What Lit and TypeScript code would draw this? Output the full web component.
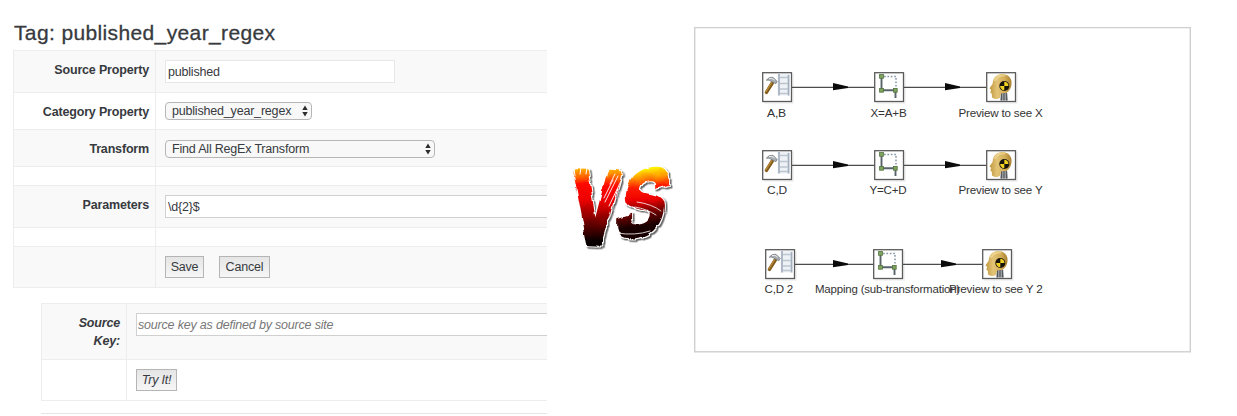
import { LitElement, html, svg, css } from "lit";
import { customElement } from "lit/decorators.js";

type Kind = "calc" | "map" | "preview";
interface Step { kind: Kind; x: number; label: string; lx: number; lw: number; }
interface Flow { y: number; base: number; arrows: number[]; steps: Step[]; }

const flows: Flow[] = [
  { y: 72, base: 116.5, arrows: [833, 945], steps: [
    { kind: "calc", x: 762, label: "A,B", lx: 767, lw: 19 },
    { kind: "map", x: 874, label: "X=A+B", lx: 870.5, lw: 36 },
    { kind: "preview", x: 986, label: "Preview to see X", lx: 958.5, lw: 84 },
  ] },
  { y: 150, base: 194, arrows: [833, 945], steps: [
    { kind: "calc", x: 762, label: "C,D", lx: 767, lw: 20 },
    { kind: "map", x: 874, label: "Y=C+D", lx: 869.5, lw: 37 },
    { kind: "preview", x: 986, label: "Preview to see Y", lx: 958.5, lw: 84 },
  ] },
  { y: 249, base: 293, arrows: [833, 941], steps: [
    { kind: "calc", x: 765, label: "C,D 2", lx: 764.5, lw: 28.5 },
    { kind: "map", x: 873, label: "Mapping (sub-transformation)", lx: 815, lw: 145 },
    { kind: "preview", x: 982, label: "Preview to see Y 2", lx: 949, lw: 93.5 },
  ] },
];

const glyphs = {
  calc: svg`
    <rect x="15.5" y="2" width="13" height="21.5" fill="#eef1f5"/>
    <path d="M17 2V23.5M26.5 3V23.5" stroke="#a4afbe" stroke-width="1.7" fill="none"/>
    <path d="M18 5.5H26M18 11.5H26M18 17H26M18 21.5H26" stroke="#bcc6d1" stroke-width="1.4"/>
    <path d="M10.3 11 4.4 20.4" stroke="#80591a" stroke-width="3.4" stroke-linecap="round"/>
    <path d="M9.6 10.9 3.8 19.8" stroke="#b98b37" stroke-width="1.3" stroke-linecap="round"/>
    <path d="M4.3 8.2Q7 4.5 11 5.3L15.2 9.5 13.8 11.7 10 9.8Q7 7.2 4.3 8.2Z" fill="#a8adb2" stroke="#747b80" stroke-width=".8"/>
    <path d="M7 6.7Q10 5.3 12.5 8" stroke="#eceff1" stroke-width="1" fill="none"/>`,
  map: svg`
    <path d="M10 4.5H22V17" stroke="#8797a8" stroke-width="1.5" stroke-dasharray="1.7 1.7" fill="none"/>
    <path d="M7.5 5V18.3H21.5V26" stroke="#59636b" stroke-width="1.9" fill="none"/>
    <g fill="#7fa25f" stroke="#53743f" stroke-width=".8">
      <rect x="5.6" y="2.5" width="3.8" height="3.8"/><rect x="5.6" y="16.4" width="3.8" height="3.8"/><rect x="19.4" y="16.4" width="3.8" height="3.8"/>
    </g>`,
  preview: svg`
    <path d="M15 20 14 28.5H22L20.7 19Z" fill="#9a9da0"/>
    <path d="M15.5 21V28.5M18 21V28.5M20.6 21V28.5" stroke="#54585c" stroke-width="1.1"/>
    <path d="M7 9C9 0 23-.5 25.3 8.5 26.3 14 24 18.8 20.5 20.8L15 21.5 13.8 26Q10 28.3 6 25.5L5.8 21.8 4.3 20.5 5.2 18 3.5 16.3 6.5 12Z" fill="url(#skin)"/>
    <path d="M9 8Q12 3 18 3.4" stroke="#f3dfa4" stroke-width="2.4" stroke-linecap="round" fill="none" opacity=".6"/>
    <circle cx="18.3" cy="14" r="5" fill="#15130c"/>
    <path d="M18.3 14V9.8A4.2 4.2 0 0 1 22.5 14ZM18.3 14V18.2A4.2 4.2 0 0 1 14.1 14Z" fill="#f0d020"/>`,
};

@customElement("step-canvas")
export class StepCanvas extends LitElement {
  static styles = css`
    :host { display: block; width: 497px; height: 326px; }
    svg { display: block; }
    .label { font: 11.3px "Liberation Sans", Arial, sans-serif; fill: #333; }
  `;

  private drawFlow(f: Flow) {
    const mid = f.y + 15;
    const first = f.steps[0].x + 15;
    const last = f.steps[2].x + 15;
    return svg`
      ${f.steps.map((s) => svg`<rect x=${s.x + 2} y=${f.y + 2} width="30" height="30" fill="#f3f3f3"/>`)}
      <path d="M${first} ${mid + .4}H${last}" stroke="#4c4c4c" stroke-width="1.3"/>
      ${f.arrows.map((a) => svg`<path d="M${a} ${mid - 4}L${a + 15} ${mid - .4}L${a + 15} ${mid + 1}L${a} ${mid + 3.3}Z" fill="#0b0b0b"/>`)}
      ${f.steps.map((s) => svg`
        <g transform="translate(${s.x} ${f.y})">
          <rect x=".7" y=".7" width="28.8" height="28.8" fill="#fff" stroke="#5b5b5b" stroke-width="1.3"/>
          ${glyphs[s.kind]}
        </g>
        <text class="label" x=${s.lx} y=${f.base} textLength=${s.lw} lengthAdjust="spacingAndGlyphs">${s.label}</text>`)}`;
  }

  render() {
    return html`<svg width="497" height="326" viewBox="694 27 497 326">
      <defs><linearGradient id="skin"><stop stop-color="#c0973f"/><stop offset=".35" stop-color="#e3c477"/><stop offset=".7" stop-color="#d3ad57"/><stop offset="1" stop-color="#a98132"/></linearGradient></defs>
      <rect x="694.7" y="27.6" width="495.6" height="324.2" fill="#fff" stroke="#cfcfcf" stroke-width="1.4"/>
      ${flows.map((f) => this.drawFlow(f))}
    </svg>`;
  }
}

@customElement("versus-mark")
export class VersusMark extends LitElement {
  static styles = css`
    :host { display: block; width: 120px; height: 110px; }
    svg { display: block; }
    .letter { font: bold 100px "Liberation Sans", Arial, sans-serif; }
  `;
  render() {
    return html`<svg width="120" height="110" viewBox="0 0 120 110">
      <defs>
        <linearGradient id="fireV" gradientUnits="userSpaceOnUse" x1="0" y1="-72" x2="0" y2="2">
          <stop stop-color="#ffac00"/><stop offset=".09" stop-color="#ff6500"/><stop offset=".2" stop-color="#ff0900"/><stop offset=".42" stop-color="#ea0000"/><stop offset=".72" stop-color="#600"/><stop offset=".94" stop-color="#080000"/>
        </linearGradient>
        <linearGradient id="fireS" gradientUnits="userSpaceOnUse" x1="0" y1="-71" x2="0" y2="0">
          <stop stop-color="#fff000"/><stop offset=".12" stop-color="#ff9b00"/><stop offset=".28" stop-color="#ff1a00"/><stop offset=".46" stop-color="#ef0000"/><stop offset=".68" stop-color="#690000"/><stop offset=".87" stop-color="#190000"/>
        </linearGradient>
        <filter id="rough" x="-20%" y="-20%" width="140%" height="140%" color-interpolation-filters="sRGB">
          <feTurbulence type="fractalNoise" baseFrequency=".09" numOctaves="2" seed="4" result="n"/>
          <feDisplacementMap in="SourceGraphic" in2="n" scale="5" xChannelSelector="R" yChannelSelector="G" result="d"/>
          <feMorphology in="d" operator="dilate" radius="1.2" result="m"/>
          <feFlood flood-color="#fff"/><feComposite in2="m" operator="in" result="edge"/>
          <feDropShadow in="edge" dx="1.5" dy="1.5" stdDeviation=".7" flood-color="#000" flood-opacity=".6" result="sh"/>
          <feMerge><feMergeNode in="sh"/><feMergeNode in="d"/></feMerge>
        </filter>
      </defs>
      <g filter="url(#rough)">
        <text class="letter" fill="url(#fireV)" stroke="url(#fireV)" stroke-width="7" stroke-linejoin="round" transform="matrix(.66 .03 -.05 1.02 12 92)">V</text>
      </g>
      <g filter="url(#rough)">
        <text class="letter" fill="url(#fireS)" stroke="url(#fireS)" stroke-width="5" transform="matrix(.7 -.09 -.22 .94 53 88)">S</text>
      </g>
      <g fill="none" stroke="#fff" stroke-linecap="round">
        <path d="M58 26 45 52M53 30 44 48M61 31 49 56M55 24 50 34" stroke-width=".9"/>
        <path d="M15 26 14 18M20 24 21 17M26 24 27 18" stroke-width="1"/>
        <path d="M77 52Q92 54 101 61M75 57Q87 59 96 65M57 83Q75 86 90 81" stroke-width=".8"/>
      </g>
    </svg>`;
  }
}

@customElement("app-root")
export class AppRoot extends LitElement {
  static styles = css`
    :host { display: flex; width: 1237px; height: 416px; overflow: hidden; background: #fff; color: #373a3e; font: 12.5px/18px "Liberation Sans", Arial, sans-serif; letter-spacing: -0.19px; }
    * { box-sizing: border-box; }
    .form { width: 547px; padding-left: 13px; overflow: hidden; flex: none; }
    .title { margin: 0; height: 50px; padding: 20px 0 0 1px; font-size: 21px; line-height: 25px; font-weight: 400; letter-spacing: 0.37px; white-space: nowrap; -webkit-text-stroke: .3px #373a3e; }
    .grid { border-left: 1px solid #ededed; border-bottom: 1px solid #ededed; }
    .row { display: flex; border-top: 1px solid #ededed; }
    .odd { background: #f9f9f9; }
    .head { width: 142px; flex: none; border-right: 1px solid #ededed; padding: 10px 6px 0 0; text-align: right; font-weight: 700; letter-spacing: -0.17px; }
    .cell { flex: 1; min-width: 0; padding: 9px 0 0 9px; display: flex; align-items: flex-start; }
    .h42 { height: 42px; } .h41 { height: 41px; } .h37 { height: 37px; } .h19 { height: 19px; } .h56 { height: 56px; }
    .field { height: 23px; line-height: 21px; border: 1px solid #d0d0d0; background: #fff; padding: 1px 0 0 2px; white-space: nowrap; }
    .short { width: 230px; border-color: #e7e7e7; }
    .long { flex: 1; border-right: 0; }
    .select { height: 18px; line-height: 16px; border: 1px solid #b6b6b6; border-radius: 4px; background: #f8f8f8; display: flex; justify-content: space-between; align-items: center; padding: 0 3px 0 6px; white-space: nowrap; }
    .cat { width: 147px; } .tr { width: 270px; }
    .tall .cell { padding-top: 10px; }
    .button { height: 22px; line-height: 20px; border: 1px solid #b5b5b5; background: linear-gradient(#e5e5e5, #f6f6f6); text-align: center; margin-right: 15px; white-space: nowrap; }
    .save { width: 39px; } .cancel { width: 51px; } .try { width: 41px; }
    .nested { margin: 15px 0 0 28px; font-style: italic; }
    .nested .head { width: 85px; }
    .hint { color: #777; padding-left: 1px; }
    .rule { margin: 12px 0 0 28px; border-top: 1px solid #e5e5e5; }
    .versus { margin: 150px 0 0 13px; flex: none; }
    .canvas { margin: 27px 0 0 14px; flex: none; }
  `;

  private arrows() {
    return html`<svg width="6" height="12" viewBox="0 0 6 12"><path d="M3 .5 5.7 5H.3ZM3 11.5 5.7 7H.3Z" fill="#2d2d2d"/></svg>`;
  }

  render() {
    return html`
      <section class="form">
        <h1 class="title">Tag: published_year_regex</h1>
        <div class="grid">
          <div class="row odd h42"><div class="head">Source Property</div><div class="cell"><div class="field short">published</div></div></div>
          <div class="row h37"><div class="head">Category Property</div><div class="cell"><div class="select cat"><span>published_year_regex</span>${this.arrows()}</div></div></div>
          <div class="row odd h37 tall"><div class="head">Transform</div><div class="cell"><div class="select tr"><span>Find All RegEx Transform</span>${this.arrows()}</div></div></div>
          <div class="row h19"><div class="head"></div></div>
          <div class="row odd h42"><div class="head">Parameters</div><div class="cell"><div class="field long">\\d{2}$</div></div></div>
          <div class="row h19"><div class="head"></div></div>
          <div class="row odd h41"><div class="head"></div><div class="cell"><div class="button save">Save</div><div class="button cancel">Cancel</div></div></div>
        </div>
        <div class="grid nested">
          <div class="row odd h56"><div class="head">Source<br>Key:</div><div class="cell"><div class="field long hint">source key as defined by source site</div></div></div>
          <div class="row h41"><div class="head"></div><div class="cell"><div class="button try">Try It!</div></div></div>
        </div>
        <div class="rule"></div>
      </section>
      <versus-mark class="versus"></versus-mark>
      <step-canvas class="canvas"></step-canvas>
    `;
  }
}
